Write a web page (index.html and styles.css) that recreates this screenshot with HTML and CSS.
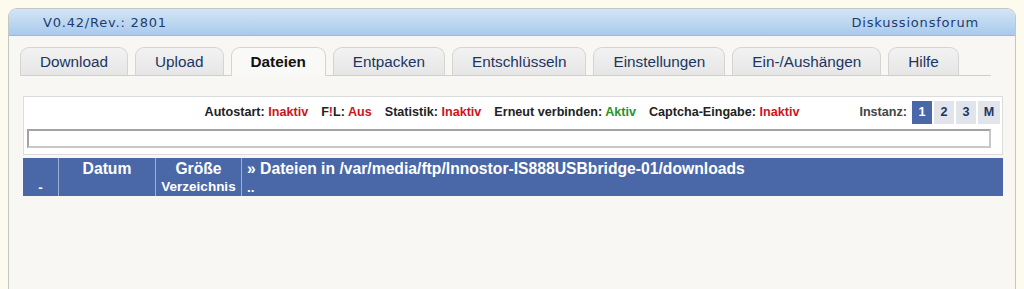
FILE: index.html
```html
<!DOCTYPE html>
<html lang="de">
<head>
<meta charset="utf-8">
<title>Dateien</title>
<link rel="stylesheet" href="styles.css">
</head>
<body>
<div class="frame">
  <div class="topbar">
    <span class="ver">V0.42/Rev.: 2801</span>
    <span class="forum">Diskussionsforum</span>
  </div>
  <div class="tabs">
    <div class="tab">Download</div>
    <div class="tab">Upload</div>
    <div class="tab active">Dateien</div>
    <div class="tab">Entpacken</div>
    <div class="tab">Entschlüsseln</div>
    <div class="tab">Einstellungen</div>
    <div class="tab">Ein-/Aushängen</div>
    <div class="tab">Hilfe</div>
  </div>
  <div class="panel">
    <div class="statusrow">
      <div class="status">
        <span>Autostart: <em class="off">Inaktiv</em></span>
        <span>F<em class="off">!</em>L: <em class="off">Aus</em></span>
        <span>Statistik: <em class="off">Inaktiv</em></span>
        <span>Erneut verbinden: <em class="on">Aktiv</em></span>
        <span>Captcha-Eingabe: <em class="off">Inaktiv</em></span>
      </div>
      <div class="instanz">
        <span class="ilabel">Instanz:</span>
        <span class="ibtn sel">1</span>
        <span class="ibtn">2</span>
        <span class="ibtn">3</span>
        <span class="ibtn wide">M</span>
      </div>
    </div>
    <div class="bar"></div>
  </div>
  <table class="files">
    <tr>
      <th class="c1"><div class="top">&nbsp;</div><div class="bot">-</div></th>
      <th class="c2"><div class="top">Datum</div><div class="bot">&nbsp;</div></th>
      <th class="c3"><div class="top">Größe</div><div class="bot">Verzeichnis</div></th>
      <th class="c4"><div class="top">» Dateien in /var/media/ftp/Innostor-IS888USBbridge-01/downloads</div><div class="bot">..</div></th>
    </tr>
  </table>
</div>
</body>
</html>
```

FILE: styles.css
```css
html, body {
  margin: 0;
  padding: 0;
}
body {
  background: #fcfbee;
  padding: 8px 0 0 8px;
  font-family: "Liberation Sans", Arial, sans-serif;
  height: 281px;
  overflow: hidden;
}
.frame {
  width: 1006px;
  height: 280px;
  border: 1px solid #c4c6c4;
  border-bottom: none;
  border-radius: 9px 9px 0 0;
  background: #f8f7f3;
  overflow: hidden;
}
.topbar {
  height: 26px;
  background: linear-gradient(#d3e5f5, #a9caec);
  border-bottom: 1px solid #9fb8d3;
  display: flex;
  align-items: center;
  justify-content: space-between;
  padding: 0 36px 0 34px;
  font-family: "DejaVu Sans", Verdana, sans-serif;
  font-size: 13px;
  letter-spacing: 0.8px;
  color: #1f3b70;
}
.tabs {
  display: flex;
  gap: 7px;
  margin: 11px 24px 0 11px;
  border-bottom: 1px solid #cfcfcf;
  height: 28px;
}
.tab {
  height: 27px;
  padding: 0 19px;
  border: 1px solid #d4d4d4;
  border-bottom: none;
  border-radius: 9px 9px 0 0;
  background: linear-gradient(#f2f2f2, #e6e6e6);
  font-size: 15.3px;
  line-height: 27px;
  color: #1c3560;
}
.tab.active {
  background: #f9f9f7;
  height: 28px;
  font-weight: bold;
  color: #111;
}
.panel {
  margin: 20px 12px 0 14px;
  background: #fff;
  border: 1px solid #dcdcdc;
  height: 57px;
  padding: 0 2px 0 3px;
}
.statusrow {
  display: flex;
  align-items: center;
  height: 30px;
}
.status {
  flex: 1;
  display: flex;
  justify-content: flex-end;
  gap: 13px;
  padding-right: 60px;
  font-size: 12.6px;
  font-weight: bold;
  color: #222;
}
.status em {
  font-style: normal;
}
.off { color: #d0121b; }
.on { color: #23962c; }
.instanz {
  display: flex;
  align-items: center;
  gap: 2px;
  font-size: 12.6px;
  font-weight: bold;
}
.ilabel {
  color: #444;
  margin-right: 3px;
}
.ibtn {
  width: 20px;
  height: 23px;
  line-height: 23px;
  text-align: center;
  background: #e1e4ea;
  color: #1e3560;
}
.ibtn.wide { width: 22px; }
.ibtn.sel {
  background: #4a67a8;
  color: #fff;
}
.bar {
  height: 15px;
  border: 2px solid #a3a3a3;
  border-right-color: #c8c8c8;
  border-bottom-color: #c8c8c8;
  background: #fff;
  margin-top: 2px;
  width: 960px;
}
.files {
  margin: 3px 0 0 14px;
  width: 980px;
  border-collapse: collapse;
  background: #4a67a8;
  color: #fff;
}
.files th {
  padding: 0;
  border-left: 1px solid #9fb0d4;
  vertical-align: top;
  height: 37px;
  font-weight: bold;
}
.files th.c1 { border-left: none; width: 35px; }
.files th.c2 { width: 96px; }
.files th.c3 { width: 85px; }
.files th.c4 { text-align: left; padding-left: 5px; }
.top {
  font-size: 15.7px;
  line-height: 20px;
  padding-top: 1px;
}
.bot {
  font-size: 13.5px;
  line-height: 16px;
}
.c1 .bot, .c4 .bot { padding-top: 1px; }
```
